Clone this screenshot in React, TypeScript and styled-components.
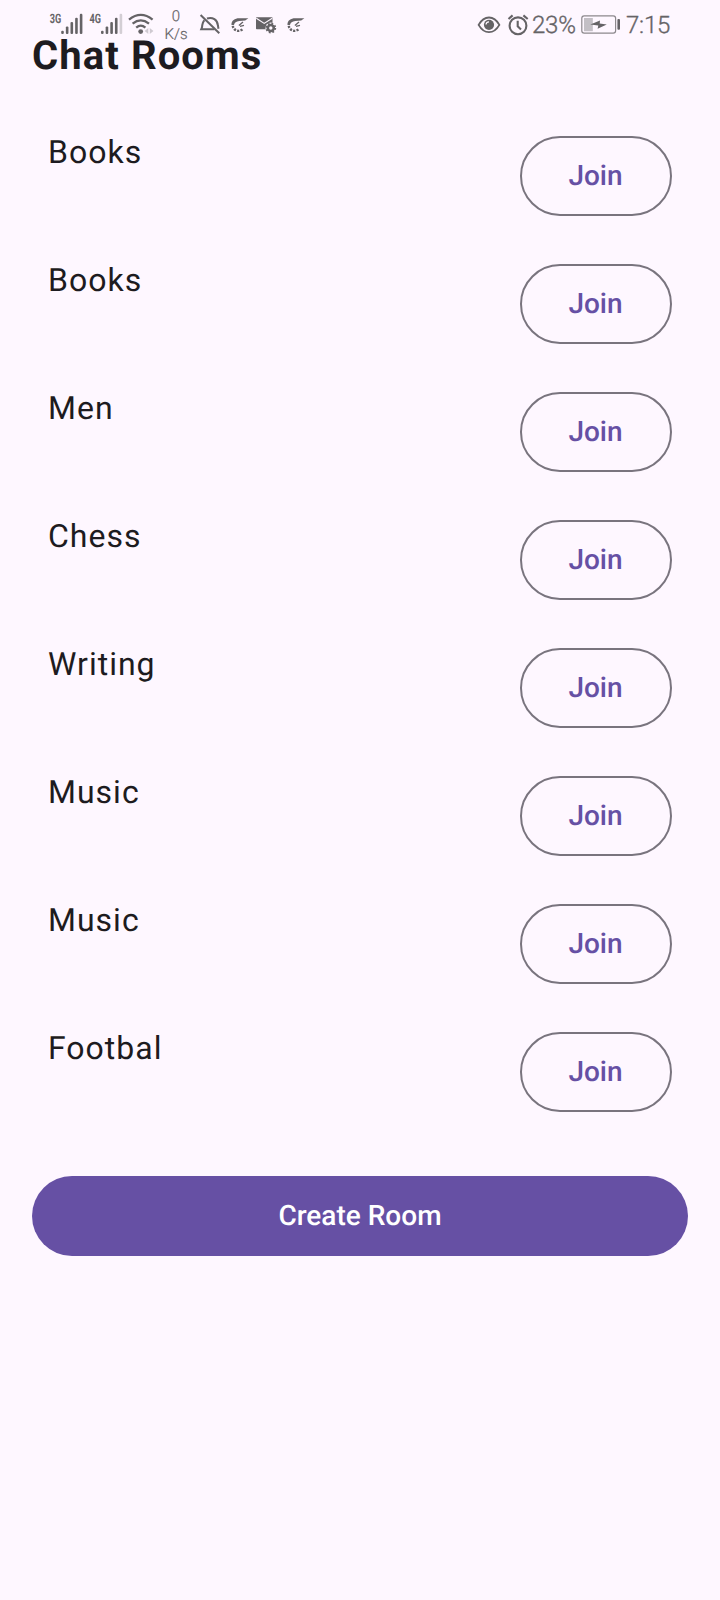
import React from "react";
import styled, { createGlobalStyle } from "styled-components";

const GlobalStyle = createGlobalStyle`
  *, *::before, *::after { box-sizing: border-box; }
  body { margin: 0; background: #fef7ff; text-rendering: geometricPrecision; }
`;

const Screen = styled.main`
  position: relative;
  width: 720px;
  min-height: 1600px;
  padding: 36px 32px 0;
  background: #fef7ff;
  color: #1d1b20;
  font-family: Roboto, "Liberation Sans", sans-serif;
`;

const StatusBar = styled.header`
  position: absolute;
  inset: 0 0 auto 0;
  height: 40px;
  padding: 0 52px 0 48px;
  display: flex;
  justify-content: space-between;
  color: #656366;
`;

const StatusGroup = styled.div`
  display: flex;
  align-items: flex-start;
`;

const Glyph = styled.svg`
  display: block;
  flex: none;
  height: 44px;
  font-family: Roboto, sans-serif;
`;

const NetSpeed = styled.div`
  width: 36px;
  padding-top: 7px;
  text-align: center;
  font-size: 15px;
  font-weight: 300;
  line-height: 18px;
  -webkit-text-stroke: 0.2px currentColor;
`;

const StatusText = styled.span<{ $indent?: number }>`
  width: 46px;
  padding-top: 11px;
  padding-left: ${({ $indent = 0 }) => $indent}px;
  font-size: 24px;
  font-weight: 300;
  line-height: 28px;
  letter-spacing: -0.2px;
  white-space: nowrap;
  -webkit-text-stroke: 0.35px currentColor;
`;

const Title = styled.h1`
  margin: 0 0 36px;
  font-size: 40px;
  font-weight: 700;
  line-height: 40px;
  letter-spacing: 1.1px;
`;

const RoomList = styled.ul`
  margin: 0;
  padding: 0;
  list-style: none;
`;

const RoomRow = styled.li`
  display: flex;
  justify-content: space-between;
  align-items: flex-start;
  height: 128px;
  padding: 16px;
`;

const RoomName = styled.span`
  font-size: 32px;
  line-height: 48px;
  letter-spacing: 1px;
`;

const Button = styled.button`
  display: flex;
  align-items: center;
  justify-content: center;
  height: 80px;
  padding: 0;
  border-radius: 40px;
  font-family: inherit;
  font-size: 28px;
  font-weight: 500;
  line-height: 40px;
  letter-spacing: 0;
  text-rendering: inherit;
`;

const JoinButton = styled(Button)`
  width: 152px;
  margin-top: 8px;
  padding-right: 1px;
  border: 2px solid #79747e;
  background: transparent;
  color: #6650a4;
`;

const CreateButton = styled(Button)`
  width: 100%;
  margin-top: 40px;
  border: none;
  background: #6650a4;
  color: #fff;
`;

const BAR_TOPS = [30.7, 26.5, 22, 17.7, 13.8];

function Signal({ label, lit, start, width }: { label: string; lit: number; start: number; width: number }) {
  return (
    <Glyph width={width} viewBox={`0 0 ${width} 44`} fill="currentColor">
      <text x={start} y="23" fontSize="13" fontWeight="700" textLength="11.5" lengthAdjust="spacingAndGlyphs">
        {label}
      </text>
      {BAR_TOPS.map((top, i) => (
        <rect key={top} x={start + 11.4 + i * 4.65} y={top} width="2.6" height={34 - top} rx="1.1" opacity={i < lit ? 1 : 0.28} />
      ))}
    </Glyph>
  );
}

const Wifi = () => (
  <Glyph width={32} viewBox="126 0 32 44" fill="none" stroke="currentColor" strokeWidth="2.3">
    <path d="M129 19.6Q140.8 10.2 152.6 19.6M132.6 23.6Q140.8 17.2 149 23.6M136.2 27.6Q140.8 23.6 145.4 27.6" />
    <circle cx="140.7" cy="31.6" r="2.4" fill="currentColor" stroke="none" />
    <path d="M148.3 28v6l-3.6-3zM149.8 28v6l3.6-3z" fill="currentColor" stroke="none" opacity=".3" />
  </Glyph>
);

const BellOff = () => (
  <Glyph width={32} viewBox="194 0 32 44" fill="none" stroke="currentColor" strokeWidth="2">
    <path d="M204.5 20.2C202.5 22 202.2 25 202 27.3L201.2 29.2H214.4M207 18.5C212.5 16.5 217.6 20 217.9 25.5L218.5 28.8" />
    <path d="M200.6 15L219.3 33.3" />
  </Glyph>
);

const Swirl = () => (
  <Glyph width={28} viewBox="226 0 28 44" fill="none" stroke="currentColor">
    <path d="M231.5 25C231.2 20.5 235 18.3 239 18.3L248.4 18.2 245.2 20.6 239.3 21.1C236.3 21.3 234.3 22.8 234 25Z" fill="currentColor" stroke="none" />
    <path d="M232.8 25.8A5.7 5.7 0 0 0 243 28.6" strokeWidth="2.4" strokeDasharray="2.2 1.2" />
    <path d="M238.9 25.6L243 22M240 26.4L244 25.4" strokeWidth="1.3" />
  </Glyph>
);

const MailGear = () => (
  <Glyph width={28} viewBox="254 0 28 44" fill="none" stroke="#fef7ff">
    <rect x="256" y="17.3" width="16.5" height="12" rx=".7" fill="currentColor" stroke="none" />
    <path d="M256.3 18.3L264.2 23.4 272.2 18.3" strokeWidth="1.2" />
    <circle cx="270.8" cy="28" r="5.4" fill="#fef7ff" stroke="none" />
    <circle cx="270.8" cy="28" r="3" stroke="currentColor" strokeWidth="2.6" />
    <circle cx="270.8" cy="28" r="4.5" stroke="currentColor" strokeWidth="1.8" strokeDasharray="1.77 1.77" />
  </Glyph>
);

const Eye = () => (
  <Glyph width={30} viewBox="474 0 30 44" fill="none" stroke="currentColor" strokeWidth="1.8">
    <path d="M478.6 24.9Q482.8 17.5 489 17.5T499.4 24.9Q495.2 32.2 489 32.2T478.6 24.9Z" />
    <circle cx="489" cy="24.8" r="5.1" fill="currentColor" stroke="none" />
    <path d="M486 24.5A3 3 0 0 1 489 21.9" stroke="#fef7ff" strokeWidth="1.2" />
  </Glyph>
);

const Alarm = () => (
  <Glyph width={28} viewBox="504 0 28 44" fill="none" stroke="currentColor" strokeWidth="2.1">
    <circle cx="518" cy="25.8" r="8.4" />
    <path d="M517.7 20.7V26.3L521 29.4M508.5 19L512.6 15.4M523.4 15.4L527.7 19" />
  </Glyph>
);

const Battery = () => (
  <Glyph width={44} viewBox="578 0 44 44" fill="currentColor">
    <rect x="581.8" y="15.8" width="33.8" height="17.4" rx="2.4" fill="none" stroke="currentColor" strokeWidth="1.2" opacity=".75" />
    <rect x="584" y="18" width="8.8" height="13.2" opacity=".38" />
    <rect x="617.4" y="19" width="2.6" height="10.8" rx="1" />
    <path d="M590.3 24.4L600 20.4 599.7 23.4 606.8 24.6 597.6 28.8 598.3 25.6Z" />
  </Glyph>
);

const rooms = ["Books", "Books", "Men", "Chess", "Writing", "Music", "Music", "Footbal"];

export default function App() {
  return (
    <>
      <GlobalStyle />
      <Screen>
        <StatusBar>
          <StatusGroup>
            <Signal label="3G" lit={5} start={1.8} width={40} />
            <Signal label="4G" lit={4} start={1.6} width={38} />
            <Wifi />
            <NetSpeed>
              0<br />
              K/s
            </NetSpeed>
            <BellOff />
            <Swirl />
            <MailGear />
            <Swirl />
          </StatusGroup>
          <StatusGroup>
            <Eye />
            <Alarm />
            <StatusText>23%</StatusText>
            <Battery />
            <StatusText $indent={4}>7:15</StatusText>
          </StatusGroup>
        </StatusBar>

        <Title>Chat Rooms</Title>
        <RoomList>
          {rooms.map((room, index) => (
            <RoomRow key={index}>
              <RoomName>{room}</RoomName>
              <JoinButton type="button">Join</JoinButton>
            </RoomRow>
          ))}
        </RoomList>
        <CreateButton type="button">Create Room</CreateButton>
      </Screen>
    </>
  );
}
